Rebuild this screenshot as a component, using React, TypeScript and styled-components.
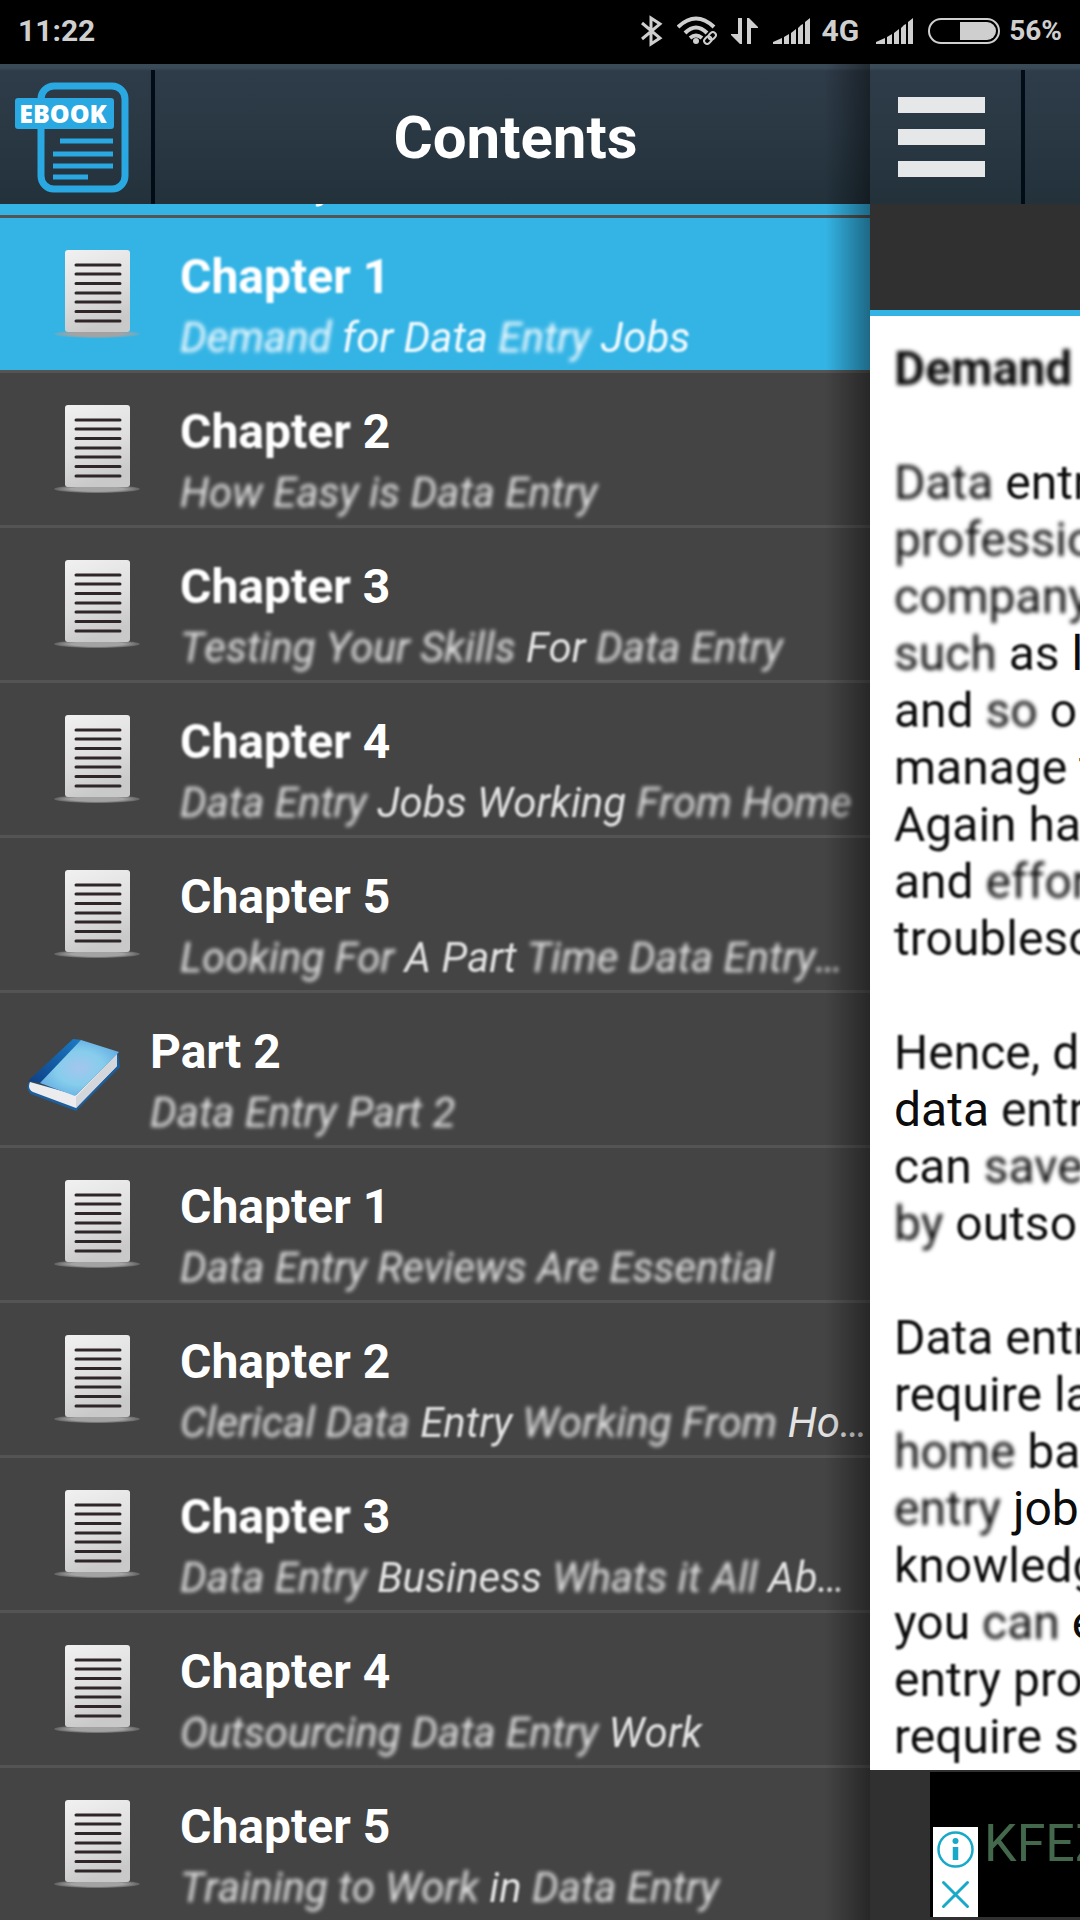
import React, { useLayoutEffect, useRef } from "react";
import styled, { createGlobalStyle, css } from "styled-components";

const GlobalStyle = createGlobalStyle`
  * { box-sizing: border-box; }
  html, body { margin: 0; height: 100%; background: #000; }
  body { font-family: Roboto, "Liberation Sans", sans-serif; overflow: hidden; }
  h1, h2, p, ul { margin: 0; padding: 0; }
`;

const Screen = styled.div`
  display: flex;
  flex-direction: column;
  height: 100vh;
  overflow: hidden;
`;

const StatusBar = styled.div`
  display: flex;
  align-items: center;
  justify-content: space-between;
  flex: none;
  height: 64px;
  padding: 0 18px 2px;
  background: #000;
  color: #cfcfcf;
  font-size: 30px;
  font-weight: 700;
  line-height: 36px;
`;

const StatusIcons = styled.div`
  display: flex;
  align-items: center;
  gap: 14px;

  svg { display: block; }
`;

const NetworkStatus = styled.div`
  display: flex;
  align-items: center;
  gap: 11px;
  padding-right: 3px;
`;

const BatteryStatus = styled.div`
  display: flex;
  align-items: center;
  gap: 9px;
  font-size: 28px;
`;

const Panels = styled.div`
  display: flex;
  flex: 1;
  min-height: 0;
`;

const Drawer = styled.nav`
  position: relative;
  display: flex;
  flex-direction: column;
  flex: 1;
  min-width: 0;
  background: #444;

  &::after {
    content: "";
    position: absolute;
    top: 0;
    right: 0;
    bottom: 0;
    width: 44px;
    background: linear-gradient(to right, rgba(0, 0, 0, 0), rgba(0, 0, 0, 0.42));
    pointer-events: none;
  }
`;

const Header = styled.header`
  display: flex;
  align-items: stretch;
  flex: none;
  height: 140px;
  background: linear-gradient(#3b4a57 0, #3b4a57 4px, #2e3b48 7px, #2a3844 50%, #22313a 100%);
`;

const HeaderButton = styled.button<{ $width: number }>`
  display: flex;
  align-items: center;
  flex: none;
  width: ${(p) => p.$width}px;
  padding: 0;
  border: 0;
  background: none;
  cursor: pointer;
`;

const HeaderDivider = styled.span`
  flex: none;
  width: 4px;
  margin-top: 6px;
  background: #020c16;
`;

const HeaderTitle = styled.h1`
  flex: 1;
  padding: 4px 0 0 6px;
  color: #fff;
  font-size: 60px;
  font-weight: 700;
  line-height: 140px;
  text-align: center;
`;

const ChapterList = styled.ul`
  flex: 1;
  min-height: 0;
  overflow-y: auto;
  list-style: none;
  scrollbar-width: none;
`;

const Row = styled.li<{ $active?: boolean }>`
  height: 155px;
  border-top: 3px solid #545454;
  background: ${(p) => (p.$active ? "#34b4e5" : "#444")};
`;

const RowLink = styled.a<{ $part?: boolean }>`
  display: flex;
  align-items: flex-start;
  gap: ${(p) => (p.$part ? 28 : 40)}px;
  height: 100%;
  padding: 29px 0 0 ${(p) => (p.$part ? 22 : 52)}px;
  color: #fff;
  text-decoration: none;

  svg { display: block; flex: none; }
`;

const RowText = styled.div`
  flex: 1;
  min-width: 0;
`;

const RowTitle = styled.h2`
  font-size: 48px;
  font-weight: 700;
  line-height: 60px;
`;

const RowSubtitle = styled.p<{ $active?: boolean }>`
  color: ${(p) => (p.$active ? "#f4fbff" : "#e2e2e2")};
  font-size: 42px;
  font-style: italic;
  font-kerning: none;
  line-height: 62px;
  white-space: nowrap;
`;

const Reader = styled.main`
  display: flex;
  flex-direction: column;
  flex: 0 0 210px;
  min-width: 0;
  overflow: hidden;
  background: #303030;
`;

const MenuButton = styled(HeaderButton)`
  flex-direction: column;
  align-items: flex-start;
  gap: 16px;
  padding: 33px 0 0 28px;
`;

const MenuBar = styled.span`
  width: 87px;
  height: 16px;
  background: #e6e7e9;
`;

const ReaderToolbar = styled.div`
  flex: none;
  height: 112px;
  border-bottom: 6px solid #34b4e5;
  background: #303030;
`;

const Article = styled.article`
  flex: 1;
  min-height: 0;
  overflow: hidden;
  padding: 24px 0 0 24px;
  background: #fff;
  color: #0c0c0c;
  font-size: 48px;
  line-height: 57px;
  white-space: nowrap;
`;

const ArticleTitle = styled.h2`
  font-size: 48px;
  font-weight: 700;
  line-height: 57px;
`;

const Paragraph = styled.p`
  margin-top: 57px;
`;

const Line = styled.span`
  display: block;
`;

const AdBar = styled.aside`
  display: flex;
  align-items: flex-start;
  flex: none;
  height: 150px;
  padding: 2px 0 3px 60px;
`;

const Ad = styled.div`
  display: flex;
  align-items: flex-end;
  flex: 1;
  min-width: 0;
  height: 145px;
  padding-left: 3px;
  overflow: hidden;
  background: #000;
`;

const AdControls = styled.div`
  display: flex;
  flex-direction: column;
  flex: none;
  width: 45px;
  background: #fff;
`;

const AdButton = styled.button`
  width: 45px;
  height: 45px;
  padding: 0;
  border: 0;
  background: none;

  svg { display: block; }
`;

const AdText = styled.p`
  align-self: flex-start;
  padding: 41px 0 0 6px;
  color: #43684c;
  font-size: 52px;
  line-height: 62px;
  white-space: nowrap;
`;

const Word = styled.span<{ $blur: number }>`
  ${(p) => p.$blur > 0 && css`filter: blur(${p.$blur}px);`}
`;

/* "word|2" renders the word with a 2px haze; plain words stay crisp. */
function Hazy({ text }: { text: string }) {
  return (
    <>
      {text.split(" ").map((token, i) => {
        const [word, blur] = token.split("|");
        return (
          <React.Fragment key={i}>
            {i > 0 && " "}
            <Word $blur={Number(blur || 0)}>{word}</Word>
          </React.Fragment>
        );
      })}
    </>
  );
}

const Signal = () => (
  <svg width="38" height="26" viewBox="0 0 38 26" fill="#cfcfcf" aria-hidden="true">
    <path d="M0 26V24L9 20V26zM11 19L16 16V26H11zM18 15L23 11V26H18zM25 10L28 7L30 6V26H25zM32 4L37 0V26H32z" />
  </svg>
);

const Bluetooth = () => (
  <svg width="22" height="32" viewBox="0 0 22 32" fill="none" stroke="#cfcfcf" strokeWidth="3" aria-hidden="true">
    <path d="M1 8L19 23L10 29V3L19 9L1 24" />
  </svg>
);

const Wifi = () => (
  <svg width="40" height="30" viewBox="0 0 40 30" fill="none" stroke="#cfcfcf" aria-hidden="true">
    <path d="M1 11Q19 -6 37 11" strokeWidth="4" />
    <path d="M8 17Q19 6 30 17" strokeWidth="4" />
    <path d="M13 22Q19 17 25 22" strokeWidth="4" />
    <circle cx="19" cy="25" r="3" fill="#cfcfcf" stroke="none" />
    <g transform="rotate(-45 33 22)">
      <rect x="25" y="18" width="17" height="8" rx="4" fill="#000" stroke="none" />
      <rect x="26" y="19" width="8" height="6" rx="3" strokeWidth="2" />
      <rect x="32" y="19" width="8" height="6" rx="3" strokeWidth="2" />
    </g>
  </svg>
);

const DataArrows = () => (
  <svg width="28" height="26" viewBox="0 0 28 26" fill="#cfcfcf" aria-hidden="true">
    <path d="M7 0H11V26H9L0 17V16H7zM16 0H18L27 9V10H20V26H16z" />
  </svg>
);

const Battery = () => (
  <svg width="72" height="26" viewBox="0 0 72 26" aria-hidden="true">
    <rect x="1" y="1" width="70" height="24" rx="12" fill="none" stroke="#cfcfcf" strokeWidth="2" />
    <path d="M32 4H59A9 9 0 0 1 59 22H32z" fill="#cfcfcf" />
  </svg>
);

const EbookLogo = () => (
  <svg width="130" height="124" viewBox="0 0 130 124" role="img" aria-label="Ebook">
    <rect x="41" y="14" width="84" height="103" rx="13" fill="none" stroke="#29a8e1" strokeWidth="7" />
    <rect x="15" y="26" width="99" height="31" rx="3" fill="#29a8e1" />
    <path d="M60 69H113M53 82H113M53 94H113M53 105H88" stroke="#29a8e1" strokeWidth="5" />
    <text x="63" y="51" textAnchor="middle" fill="#fff" fontFamily='"Open Sans", sans-serif' fontSize="25" fontWeight="800">EBOOK</text>
  </svg>
);

const PageIcon = () => (
  <svg width="88" height="96" viewBox="0 0 88 96" aria-hidden="true">
    <defs>
      <linearGradient id="sheet" x1="0" y1="0" x2="0.3" y2="1">
        <stop offset="0" stopColor="#f1f1f1" />
        <stop offset="0.6" stopColor="#dedede" />
        <stop offset="1" stopColor="#c9c9c9" />
      </linearGradient>
      <radialGradient id="sheetShadow">
        <stop offset="0.6" stopColor="#a3a3a3" />
        <stop offset="1" stopColor="#a3a3a3" stopOpacity="0.3" />
      </radialGradient>
    </defs>
    <ellipse cx="45" cy="87" rx="43" ry="4" fill="url(#sheetShadow)" />
    <rect x="13" y="3" width="65" height="82" rx="3" fill="url(#sheet)" />
    <path
      d="M24 18H68M24 27H68M24 36.500H68M24 46H68M24 55H68M24 64.500H68M24 74H68"
      stroke="#2f2628" strokeWidth="3" strokeLinecap="round"
    />
  </svg>
);

const BookIcon = () => (
  <svg width="100" height="96" viewBox="0 -1 100 96" aria-hidden="true">
    <defs>
      <radialGradient id="cover" cx="0.5" cy="0.5" r="0.6">
        <stop offset="0" stopColor="#a4c6ee" />
        <stop offset="0.5" stopColor="#86cdec" />
        <stop offset="1" stopColor="#5fa9e2" />
      </radialGradient>
      <linearGradient id="spine" x1="0" y1="1" x2="1" y2="0">
        <stop offset="0" stopColor="#0d3f86" />
        <stop offset="1" stopColor="#1c7cc4" />
      </linearGradient>
    </defs>
    <path d="M7 59Q3 66 9 71L54 88L98 44L96 29L54 70z" fill="#1d5f9c" />
    <path d="M8 59Q5 66 11 69L54 85L95 43V31L54 72z" fill="#ececee" />
    <path d="M54 74V85L95 43V31z" fill="#d3d6da" />
    <path d="M6 58L51 16L60 17L19 60L12 59z" fill="url(#spine)" />
    <path d="M18 60L59 17L97 29L53 73z" fill="url(#cover)" />
  </svg>
);

const InfoIcon = () => (
  <svg width="45" height="45" viewBox="0 0 45 45" aria-hidden="true">
    <circle cx="22.500" cy="22.500" r="17" fill="none" stroke="#18a9c9" strokeWidth="2.500" />
    <circle cx="22.500" cy="14" r="3" fill="#18a9c9" />
    <path d="M22.500 20V33" stroke="#18a9c9" strokeWidth="5.500" />
  </svg>
);

const CloseIcon = () => (
  <svg width="45" height="45" viewBox="0 0 45 45" aria-hidden="true">
    <path d="M10.500 10.500L34.500 34.500M34.500 10.500L10.500 34.500" stroke="#18a9c9" strokeWidth="3" strokeLinecap="round" />
  </svg>
);

type Entry = { title: string; subtitle: string; part?: boolean; active?: boolean };

const entries: Entry[] = [
  { title: "Part 1", subtitle: "Data Entry Part 1", part: true, active: true },
  { title: "Chapter|1 1|1", subtitle: "Demand|2 for|1 Data|1 Entry|2 Jobs|1", active: true },
  { title: "Chapter|1 2", subtitle: "How|2 Easy|2 is|2 Data|2 Entry|2" },
  { title: "Chapter|1 3", subtitle: "Testing|2 Your|2 Skills|2 For|1 Data|2 Entry|2" },
  { title: "Chapter|1 4", subtitle: "Data|2 Entry|2 Jobs|1 Working|1 From|2 Home|2" },
  { title: "Chapter 5", subtitle: "Looking|2 For|2 A|1 Part|1 Time|2 Data|2 Entry…|2" },
  { title: "Part 2", subtitle: "Data|2 Entry|2 Part|2 2|2", part: true },
  { title: "Chapter 1", subtitle: "Data|2 Entry|2 Reviews|2 Are|2 Essential|2" },
  { title: "Chapter 2", subtitle: "Clerical|2 Data|2 Entry|1 Working|2 From|2 Ho…" },
  { title: "Chapter|1 3", subtitle: "Data|2 Entry|2 Business|1 Whats|2 it|2 All|2 Ab…|1" },
  { title: "Chapter 4", subtitle: "Outsourcing|2 Data|2 Entry|2 Work|1" },
  { title: "Chapter 5", subtitle: "Training|2 to|2 Work|2 in|1 Data|2 Entry|2" },
];

const paragraphs: string[][] = [
  [
    "Data|2 entry|1", "professio|2", "company|2", "such|2 as|1 l", "and|1 so|2 o|1",
    "manage|1 t", "Again|1 ha|1", "and|1 effor|2", "troubleso|1",
  ],
  ["Hence,|1 d|1", "data entr|1", "can|1 save|2", "by|2 outso|1"],
  [
    "Data|1 entr|1", "require|1 la|1", "home|2 ba|1", "entry|2 job", "knowledg|1",
    "you|1 can|2 e", "entry|1 pro|1", "require|1 s|1",
  ],
];

export default function App() {
  const listRef = useRef<HTMLUListElement>(null);

  useLayoutEffect(() => {
    const list = listRef.current;
    if (list) list.scrollTop = list.scrollHeight;
  }, []);

  return (
    <Screen>
      <GlobalStyle />
      <StatusBar>
        <span>11:22</span>
        <StatusIcons>
          <Bluetooth />
          <Wifi />
          <DataArrows />
          <NetworkStatus>
            <Signal />
            <span>4G</span>
          </NetworkStatus>
          <Signal />
          <BatteryStatus>
            <Battery />
            <span>56%</span>
          </BatteryStatus>
        </StatusIcons>
      </StatusBar>
      <Panels>
        <Drawer aria-label="Contents">
          <Header>
            <HeaderButton $width={151} aria-label="Ebook home">
              <EbookLogo />
            </HeaderButton>
            <HeaderDivider />
            <HeaderTitle>Contents</HeaderTitle>
          </Header>
          <ChapterList ref={listRef}>
            {entries.map((entry, i) => (
              <Row key={i} $active={entry.active}>
                <RowLink href="#" $part={entry.part}>
                  {entry.part ? <BookIcon /> : <PageIcon />}
                  <RowText>
                    <RowTitle><Hazy text={entry.title} /></RowTitle>
                    <RowSubtitle $active={entry.active}><Hazy text={entry.subtitle} /></RowSubtitle>
                  </RowText>
                </RowLink>
              </Row>
            ))}
          </ChapterList>
        </Drawer>
        <Reader>
          <Header>
            <MenuButton $width={151} aria-label="Menu">
              <MenuBar />
              <MenuBar />
              <MenuBar />
            </MenuButton>
            <HeaderDivider />
          </Header>
          <ReaderToolbar />
          <Article>
            <ArticleTitle><Hazy text="Demand|2" /></ArticleTitle>
            {paragraphs.map((lines, i) => (
              <Paragraph key={i}>
                {lines.map((line) => (
                  <Line key={line}><Hazy text={line} /></Line>
                ))}
              </Paragraph>
            ))}
          </Article>
          <AdBar>
            <Ad>
              <AdControls>
                <AdButton aria-label="Ad information"><InfoIcon /></AdButton>
                <AdButton aria-label="Close ad"><CloseIcon /></AdButton>
              </AdControls>
              <AdText>KFEZ</AdText>
            </Ad>
          </AdBar>
        </Reader>
      </Panels>
    </Screen>
  );
}
